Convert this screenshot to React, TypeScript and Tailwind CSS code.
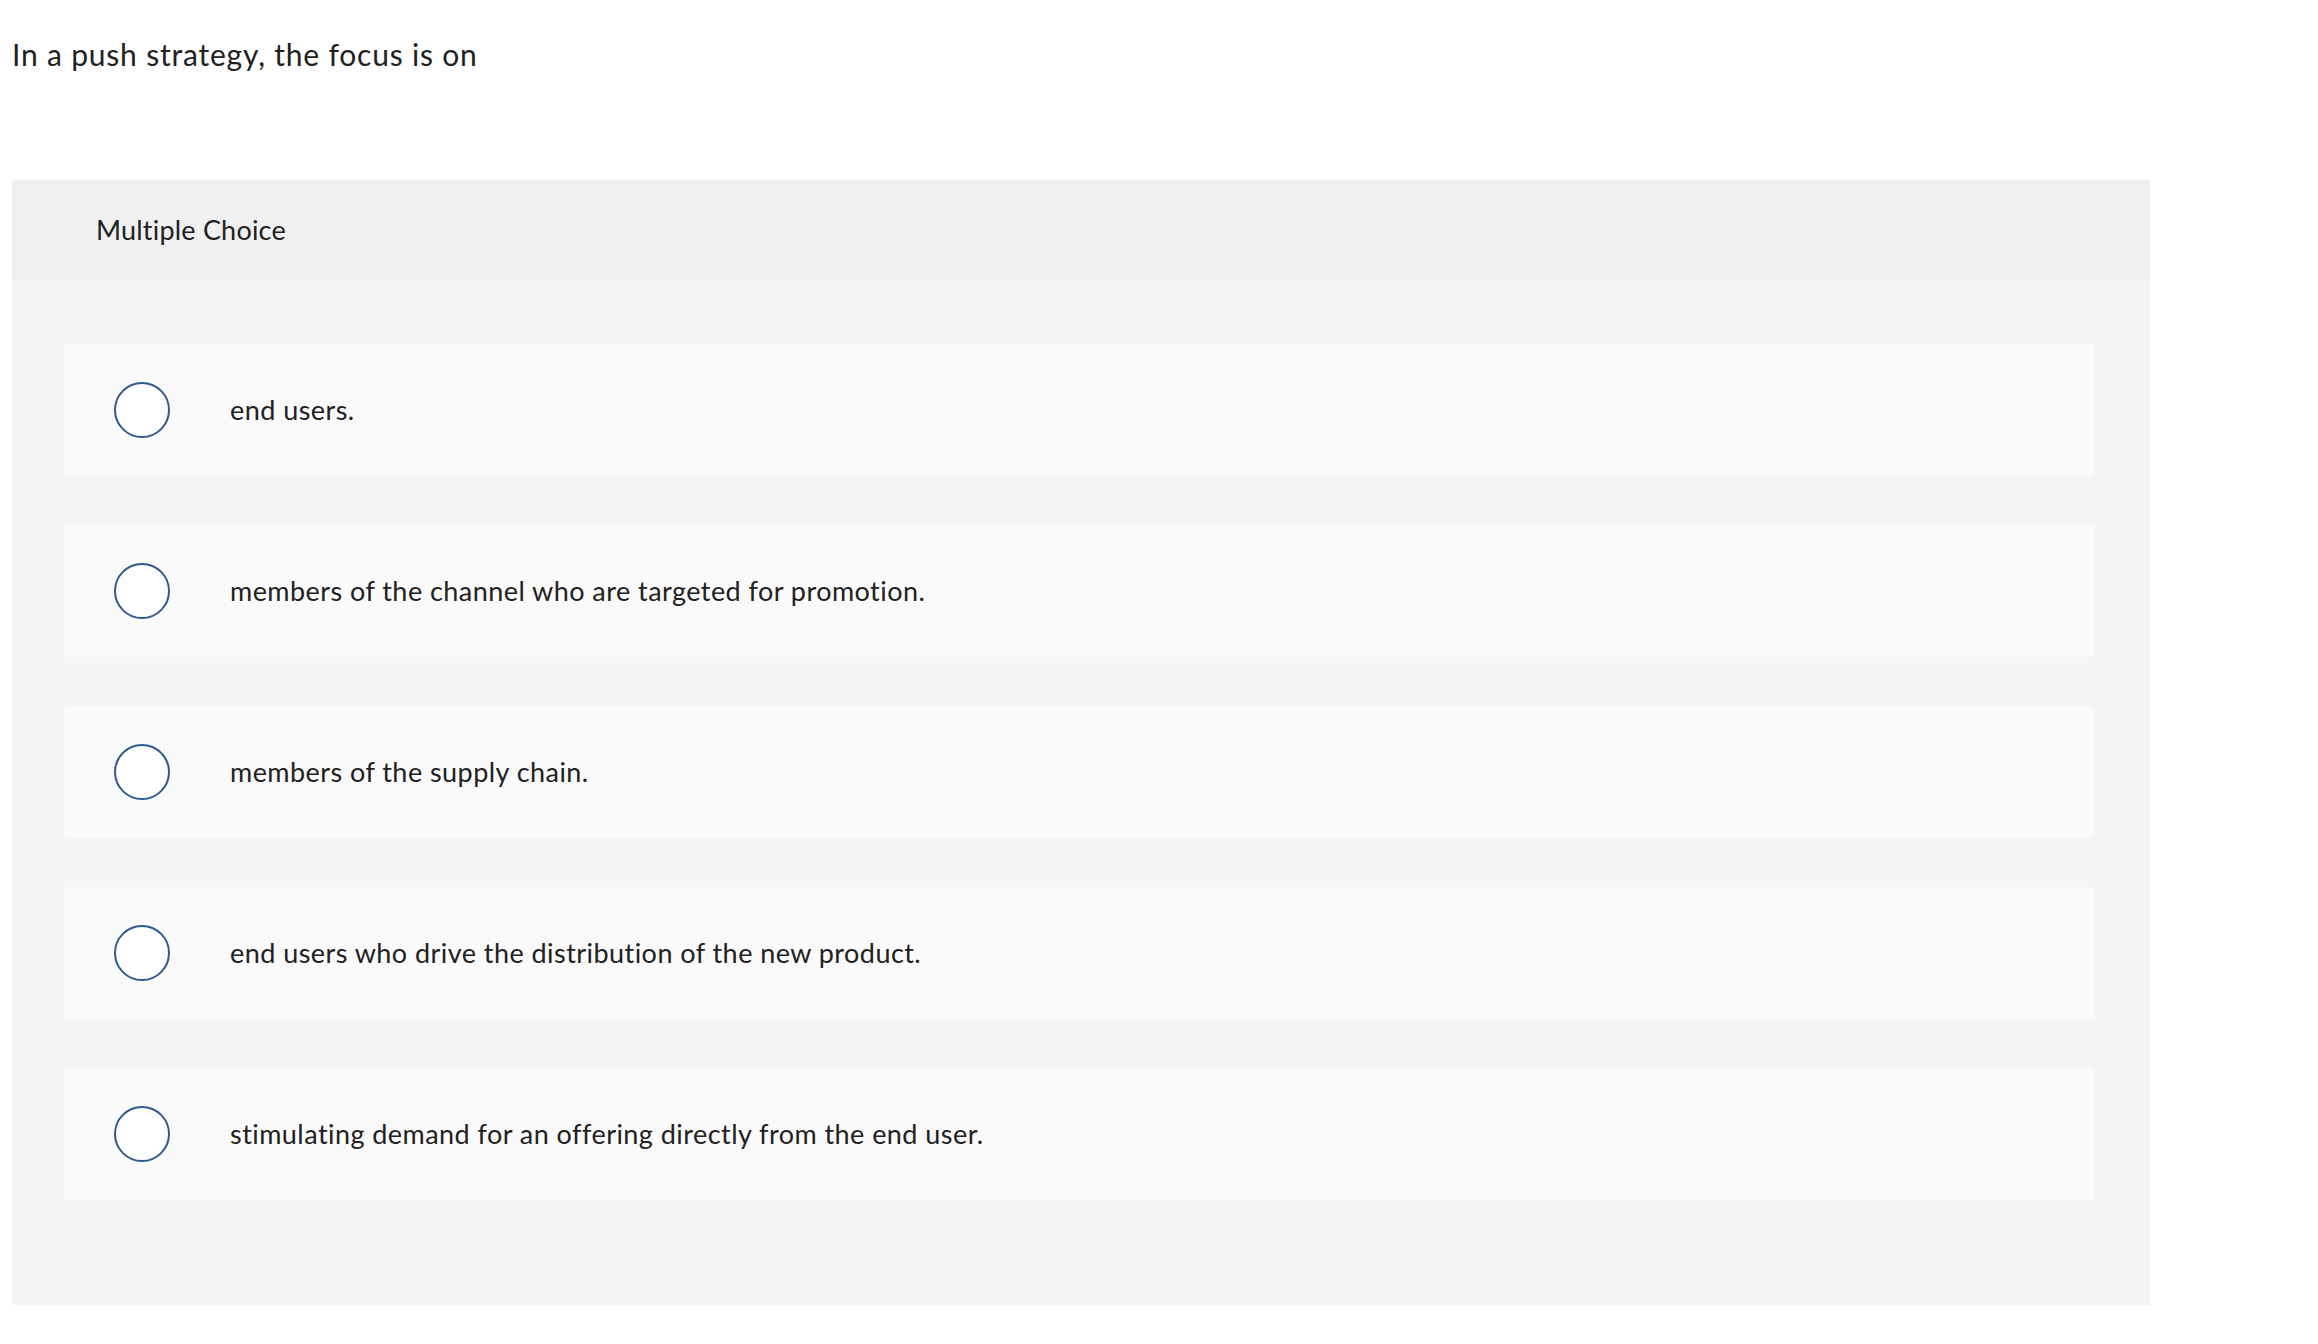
const OPTIONS = [
  "end users.",
  "members of the channel who are targeted for promotion.",
  "members of the supply chain.",
  "end users who drive the distribution of the new product.",
  "stimulating demand for an offering directly from the end user.",
];

export default function App() {
  return (
    <div className="min-h-screen bg-white text-[#212121]" style={{ fontFamily: "Lato, 'Open Sans', sans-serif" }}>
      <div className="pl-[12px] pt-[36px] text-[30px] leading-[36px] tracking-[0.8px]">In a push strategy, the focus is on</div>

      <div className="ml-[12px] mt-[108px] w-[2138px] rounded-t-[4px] bg-[#f5f5f5]">
        <div className="flex h-[100px] items-center rounded-t-[4px] bg-[#f0f0f0] pl-[84px] text-[27px] tracking-[0.2px]">
          Multiple Choice
        </div>
        <div className="flex flex-col gap-[49px] pb-[105px] pl-[52px] pr-[56px] pt-[64px]">
          {OPTIONS.map((o) => (
            <label key={o} className="flex h-[132px] cursor-pointer items-center rounded-[4px] bg-[#fafafa] pl-[50px]">
              <span className="h-[56px] w-[56px] shrink-0 rounded-full border-[2px] border-[#2d5b8f] bg-white" />
              <span className="ml-[60px] text-[27px] tracking-[0.45px]">{o}</span>
            </label>
          ))}
        </div>
      </div>
    </div>
  );
}
